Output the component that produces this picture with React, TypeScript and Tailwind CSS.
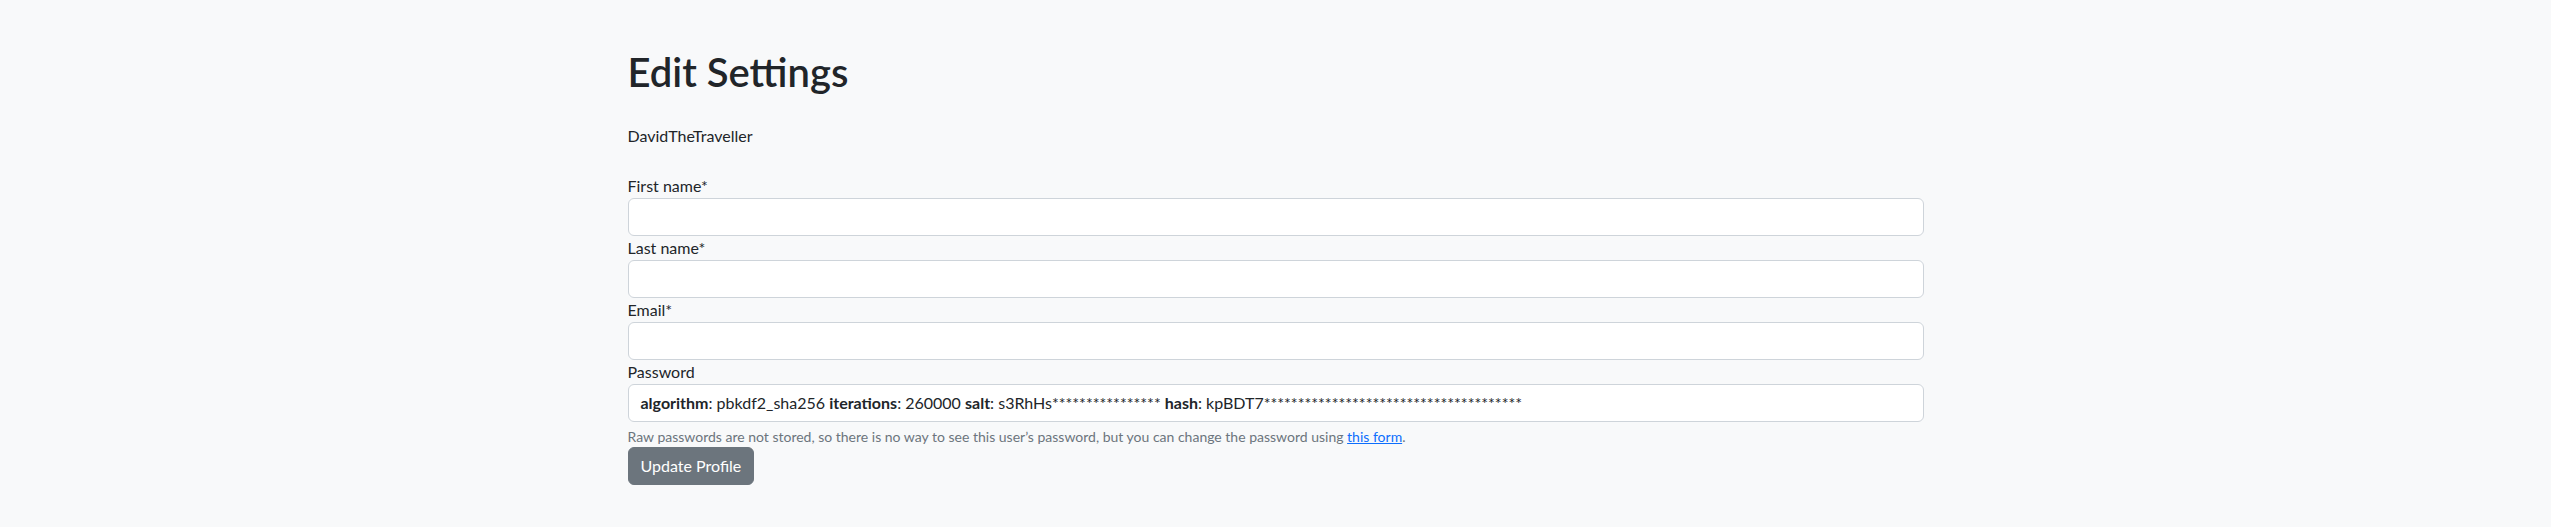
import React from 'react'

function Field({ label }: { label: string }) {
  return (
    <div className="flex flex-col">
      <label className="text-[16px] leading-6 text-[#212529]">{label}</label>
      <input
        type="text"
        className="h-[38px] w-full rounded-[6px] border border-[#ced4da] bg-white px-3 text-[16px] outline-none"
      />
    </div>
  )
}

export default function App() {
  return (
    <div className="min-h-screen w-full bg-[#f8f9fa] text-[#212529] font-['Lato',sans-serif]">
      <div className="mx-auto w-[1320px] px-3 pt-12">
        <h1 className="mb-2 text-[40px] leading-[48px] font-semibold">Edit Settings</h1>
        <p className="mt-[28px] text-[16px] leading-6">DavidTheTraveller</p>

        <form className="mt-[26px] flex flex-col">
          <Field label="First name*" />
          <Field label="Last name*" />
          <Field label="Email*" />
          <div className="flex flex-col">
            <label className="text-[16px] leading-6">Password</label>
            <div className="flex h-[38px] items-center rounded-[6px] border border-[#ced4da] bg-white px-3 text-[16px]">
              <span>
                <strong className="font-bold">algorithm</strong>: pbkdf2_sha256{' '}
                <strong className="font-bold">iterations</strong>: 260000{' '}
                <strong className="font-bold">salt</strong>: s3RhHs****************{' '}
                <strong className="font-bold">hash</strong>: kpBDT7**************************************
              </span>
            </div>
            <p className="mt-1 text-[14px] leading-[21px] text-[#6c757d]">
              Raw passwords are not stored, so there is no way to see this user’s password, but you can change the password using{' '}
              <a href="#" className="text-[#0d6efd] underline">this form</a>.
            </p>
          </div>
          <div>
            <button
              type="button"
              className="h-[38px] rounded-[6px] border border-[#6c757d] bg-[#6c757d] px-3 text-[16px] text-white"
            >
              Update Profile
            </button>
          </div>
        </form>
      </div>
    </div>
  )
}
